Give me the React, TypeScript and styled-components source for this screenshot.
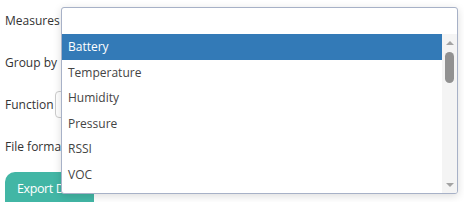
import React from "react";
import styled, { createGlobalStyle } from "styled-components";

const GlobalStyle = createGlobalStyle`
  html, body { margin: 0; padding: 0; background: #ffffff; }
  body { font-family: "Open Sans", "Noto Sans", sans-serif; color: #333333; }
  * { box-sizing: border-box; }
`;

const Page = styled.div`
  position: relative;
  width: 464px;
  height: 202px;
  overflow: hidden;
`;

const Form = styled.div`
  display: flex;
  flex-direction: column;
  gap: 15px;
  padding: 7px 7px 0 5px;
`;

const Row = styled.div`
  display: flex;
  align-items: center;
  height: 27px;
`;

const Label = styled.label`
  width: 50px;
  flex: none;
  font-size: 12px;
  color: #333333;
  white-space: nowrap;
`;

const SelectBox = styled.div<{ $inset?: number }>`
  flex: 1;
  margin-left: ${(p) => p.$inset ?? 0}px;
  height: 27px;
  border: 1px solid #cccccc;
  border-radius: 4px;
  background: #ffffff;
`;

const ExportButton = styled.button`
  margin-top: -3px;
  width: 89px;
  height: 40px;
  border: none;
  border-radius: 10px;
  background: #42b6a5;
  color: #ffffff;
  font-family: "Open Sans", "Noto Sans", sans-serif;
  font-size: 12.5px;
  font-weight: 500;
  letter-spacing: -0.4px;
  text-align: left;
  padding: 0 0 8px 12px;
  white-space: nowrap;
  overflow: hidden;
`;

const Dropdown = styled.div`
  position: absolute;
  top: 7px;
  left: 61px;
  width: 397px;
  height: 187px;
  border: 1px solid #a7b1c7;
  border-radius: 3px;
  background: #ffffff;
  box-shadow: 0 2px 8px rgba(0, 0, 0, 0.14);
  display: flex;
  flex-direction: column;
  overflow: hidden;
`;

const SearchArea = styled.div`
  height: 26px;
  flex: none;
`;

const ListWrap = styled.div`
  flex: 1;
  display: flex;
  min-height: 0;
`;

const List = styled.ul`
  flex: 1;
  margin: 0;
  padding: 0;
  list-style: none;
  overflow: hidden;
`;

const Option = styled.li<{ $active?: boolean }>`
  height: 25.5px;
  display: flex;
  align-items: center;
  padding: 0 6px;
  font-size: 12px;
  color: ${(p) => (p.$active ? "#ffffff" : "#444444")};
  background: ${(p) => (p.$active ? "#337ab7" : "transparent")};
`;

const Scrollbar = styled.div`
  width: 15px;
  flex: none;
  background: #f4f4f4;
  display: flex;
  flex-direction: column;
  align-items: center;
  padding: 7px 0 6px;
`;

const ArrowUp = styled.div`
  width: 0;
  height: 0;
  border-left: 4px solid transparent;
  border-right: 4px solid transparent;
  border-bottom: 4px solid #a3a3a3;
`;

const ArrowDown = styled.div`
  width: 0;
  height: 0;
  border-left: 4px solid transparent;
  border-right: 4px solid transparent;
  border-top: 4px solid #a3a3a3;
`;

const Thumb = styled.div`
  margin-top: 7px;
  width: 9px;
  height: 31px;
  border-radius: 4.5px;
  background: #919191;
`;

const Spacer = styled.div`
  flex: 1;
`;

const options = ["Battery", "Temperature", "Humidity", "Pressure", "RSSI", "VOC", "CO2"];

export default function App() {
  return (
    <Page>
      <GlobalStyle />
      <Form>
        <Row>
          <Label>Measures</Label>
          <SelectBox $inset={6} />
        </Row>
        <Row>
          <Label>Group by</Label>
          <SelectBox $inset={6} />
        </Row>
        <Row>
          <Label>Function</Label>
          <SelectBox />
        </Row>
        <Row>
          <Label>File format</Label>
          <SelectBox $inset={6} />
        </Row>
        <div>
          <ExportButton>Export Data</ExportButton>
        </div>
      </Form>
      <Dropdown>
        <SearchArea />
        <ListWrap>
          <List>
            {options.map((o, i) => (
              <Option key={o} $active={i === 0}>
                {o}
              </Option>
            ))}
          </List>
          <Scrollbar>
            <ArrowUp />
            <Thumb />
            <Spacer />
            <ArrowDown />
          </Scrollbar>
        </ListWrap>
      </Dropdown>
    </Page>
  );
}
